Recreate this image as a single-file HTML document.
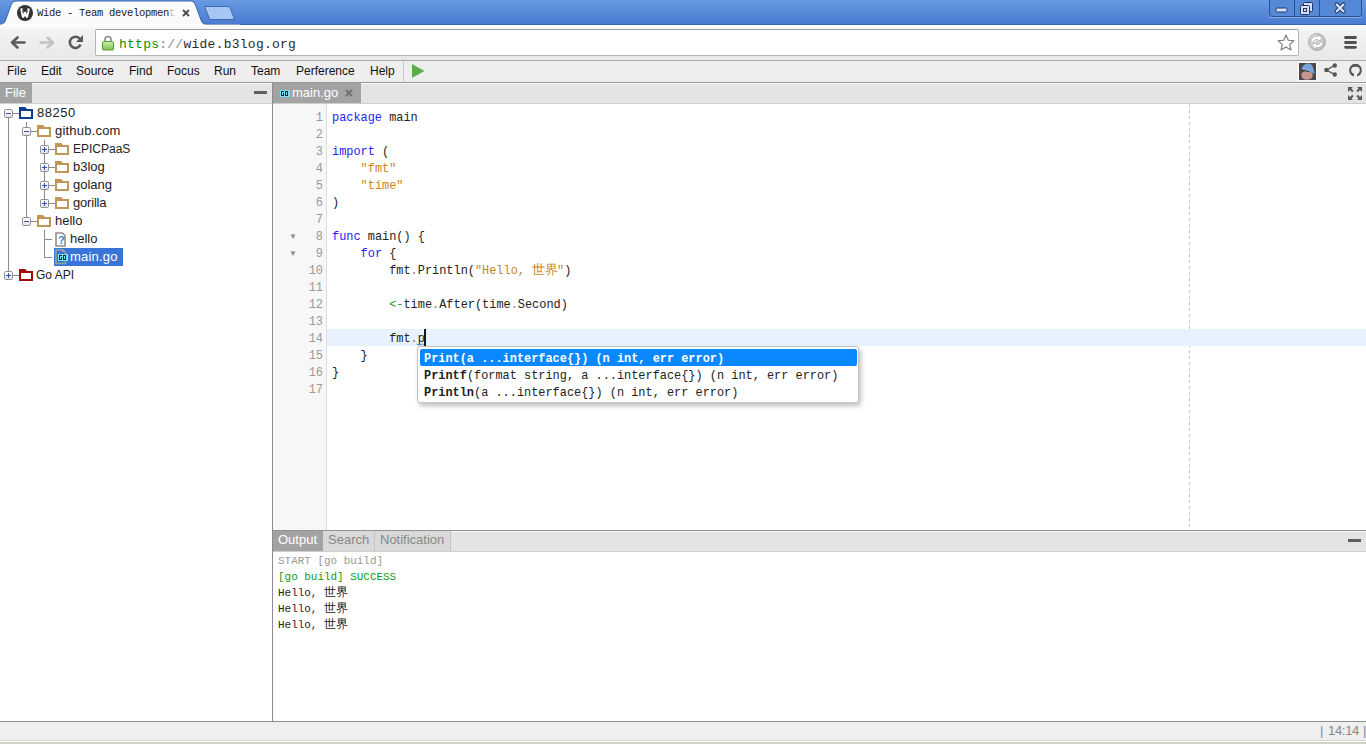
<!DOCTYPE html>
<html><head><meta charset="utf-8">
<style>
html,body{margin:0;padding:0;width:1366px;height:744px;overflow:hidden;background:#fff;position:relative;font-family:"Liberation Sans",sans-serif;}
.a{position:absolute;}
.t{position:absolute;white-space:pre;line-height:1;}
.mono{font-family:"Liberation Mono",monospace;}
svg{position:absolute;display:block;overflow:visible;}
</style></head><body>

<!-- ===== Chrome title bar ===== -->
<div class="a" style="left:0;top:0;width:1366px;height:24px;background:linear-gradient(#679ae1,#4a7bd1);"></div>
<div class="a" style="left:0;top:24px;width:1366px;height:1px;background:#3662b1;"></div>
<!-- active tab -->
<svg style="left:0;top:0" width="240" height="26" viewBox="0 0 240 26">
  <defs><linearGradient id="tabg" x1="0" y1="0" x2="0" y2="1"><stop offset="0" stop-color="#ffffff"/><stop offset="1" stop-color="#f8f8f8"/></linearGradient></defs>
  <path d="M-2 25 L0 24.5 C4 24 5 22 6 19 L11 5 C12.5 2 14 1 17 1 L190 1 C193 1 194 2 195.5 5 L201 20 C202 23 203.5 24.5 207 24.5 L240 24.5 L240 26 L-2 26 Z" fill="url(#tabg)" stroke="#3a64ad" stroke-width="1"/>
  <rect x="0" y="24.6" width="240" height="2" fill="#fdfdfd"/>
  <!-- new tab button -->
  <path d="M204.5 6.5 L227 6.5 C229 6.5 230 7.5 230.6 9 L234.5 19.5 L211.5 19.5 C210 19.5 209.5 18.8 209 17.5 Z" fill="#a6c7f3" stroke="#3f68b3" stroke-width="1"/>
</svg>
<!-- favicon -->
<svg style="left:17px;top:5px" width="16" height="16" viewBox="0 0 16 16">
  <circle cx="8" cy="8" r="8" fill="#333"/>
  <path d="M4.6 4.6 L6.1 11.6 L8 8 L9.9 11.6 L11.4 4.6" stroke="#fff" stroke-width="2.6" fill="none" stroke-linecap="round" stroke-linejoin="round"/>
  <path d="M5.6 5.2 L6.3 8.2 M10.4 5.2 L9.7 8.2" stroke="#333" stroke-width="0.9" stroke-linecap="round"/>
</svg>
<div class="t mono" style="left:37px;top:8px;font-size:10.5px;letter-spacing:-0.3px;color:#1a1a1a;">Wide - Team developmen<span style="color:#bbb">t</span></div>
<svg style="left:182px;top:9px" width="8" height="8" viewBox="0 0 8 8"><path d="M1 1 L7 7 M7 1 L1 7" stroke="#4a4a4a" stroke-width="1.8"/></svg>

<!-- window controls -->
<svg style="left:1269px;top:0" width="94" height="18" viewBox="0 0 94 18">
  <path d="M0.5 0 L0.5 13 C0.5 15.5 2 16.5 4.5 16.5 L89 16.5 C91.5 16.5 92.5 15.5 92.5 13 L92.5 0" fill="#5688d8" stroke="#2d4f8f" stroke-width="1"/>
  <path d="M0.5 17.5 L92.5 17.5" stroke="#80a8e8" stroke-width="1"/>
  <path d="M25.5 0 L25.5 16 M50.5 0 L50.5 16" stroke="#2d4f8f" stroke-width="1"/>
  <rect x="7" y="8" width="11" height="4" rx="1.5" fill="#d3e0f6" stroke="#22355f" stroke-width="1"/>
  <rect x="34.5" y="2.5" width="9" height="9" rx="1" fill="#d3e0f6" stroke="#22355f" stroke-width="1"/>
  <rect x="31.5" y="5.5" width="9" height="9" rx="1" fill="#d3e0f6" stroke="#22355f" stroke-width="1"/>
  <rect x="34" y="8" width="4" height="4" fill="#22355f"/>
  <rect x="35" y="9" width="2" height="2" fill="#d3e0f6"/>
  <path d="M67.8 4.6 L74.4 11.2 M74.4 4.6 L67.8 11.2" stroke="#22355f" stroke-width="4.2" stroke-linecap="round"/>
  <path d="M67.8 4.6 L74.4 11.2 M74.4 4.6 L67.8 11.2" stroke="#d3e0f6" stroke-width="2.3" stroke-linecap="round"/>
</svg>

<!-- ===== Chrome toolbar ===== -->
<div class="a" style="left:0;top:25px;width:1366px;height:35px;background:linear-gradient(#fefefe 0,#f3f3f3 5px,#e8e8e8 35px);"></div>
<div class="a" style="left:0;top:60px;width:1366px;height:1px;background:#a9a9a9;"></div>
<!-- back -->
<svg style="left:10px;top:36px" width="16" height="14" viewBox="0 0 16 14">
  <path d="M14.5 6.5 L2.5 6.5 M7.5 1.5 L2 6.5 L7.5 11.5" stroke="#5c5c5c" stroke-width="2.6" fill="none" stroke-linecap="round" stroke-linejoin="round"/>
</svg>
<!-- forward -->
<svg style="left:39px;top:36px" width="16" height="14" viewBox="0 0 16 14">
  <path d="M1.5 6.5 L13.5 6.5 M8.5 1.5 L14 6.5 L8.5 11.5" stroke="#c2c2c2" stroke-width="2.4" fill="none" stroke-linecap="round" stroke-linejoin="round"/>
</svg>
<!-- reload -->
<svg style="left:68px;top:35px" width="16" height="15" viewBox="0 0 16 15">
  <path d="M12.6 9.5 A5.6 5.6 0 1 1 11.6 3.6" stroke="#5a5a5a" stroke-width="2.6" fill="none"/>
  <path d="M15 0 L15 7 L8 7 Z" fill="#5a5a5a"/>
</svg>
<!-- omnibox -->
<div class="a" style="left:95px;top:29px;width:1202px;height:25px;background:#fff;border:1px solid #b4b4b4;border-top-color:#9d9d9d;border-radius:2px;"></div>
<!-- lock -->
<svg style="left:102px;top:35px" width="12" height="16" viewBox="0 0 12 16">
  <path d="M3 7 L3 4.5 A3 3 0 0 1 9 4.5 L9 7" stroke="#8a8a8a" stroke-width="1.6" fill="none"/>
  <defs><linearGradient id="lk" x1="0" y1="0" x2="0" y2="1"><stop offset="0" stop-color="#cdf0a8"/><stop offset="1" stop-color="#77c04a"/></linearGradient></defs>
  <rect x="0.5" y="6.5" width="11" height="8.5" rx="1" fill="url(#lk)" stroke="#5a9a36" stroke-width="1"/>
</svg>
<div class="t mono" style="left:119px;top:38px;font-size:13px;letter-spacing:0.25px;color:#2a2a2a;"><span style="color:#089108">https</span><span style="color:#8a8a8a">://</span>wide.b3log.org</div>
<!-- star -->
<svg style="left:1277px;top:34px" width="18" height="17" viewBox="0 0 18 17">
  <path d="M9 1 L11.3 6.2 L17 6.7 L12.7 10.4 L14 16 L9 13 L4 16 L5.3 10.4 L1 6.7 L6.7 6.2 Z" fill="#fff" stroke="#777" stroke-width="1.1" stroke-linejoin="round"/>
</svg>
<!-- extension globe -->
<svg style="left:1308px;top:33px" width="18" height="18" viewBox="0 0 18 18">
  <defs><radialGradient id="glb" cx="0.4" cy="0.35" r="0.75"><stop offset="0" stop-color="#f2f2f2"/><stop offset="1" stop-color="#b8b8b8"/></radialGradient></defs>
  <circle cx="9" cy="9" r="8.4" fill="url(#glb)" stroke="#9c9c9c" stroke-width="0.9"/>
  <path d="M2.8 9.2 C2.8 5 6 2.6 10.2 3.4 L10.6 1.6 L14.6 6.2 L9.4 8.4 L9.8 6.6 C7.2 6 5.6 7.4 5.4 9.4 Z" fill="#fff" stroke="#909090" stroke-width="0.6"/>
  <path d="M15.2 8.8 C15.2 13 12 15.4 7.8 14.6 L7.4 16.4 L3.4 11.8 L8.6 9.6 L8.2 11.4 C10.8 12 12.4 10.6 12.6 8.6 Z" fill="#fff" stroke="#909090" stroke-width="0.6"/>
</svg>
<!-- hamburger -->
<svg style="left:1344px;top:36px" width="13" height="13" viewBox="0 0 13 13">
  <path d="M1.5 1.5 L11.5 1.5 M1.5 6.5 L11.5 6.5 M1.5 11.3 L11.5 11.3" stroke="#505050" stroke-width="2.8" stroke-linecap="round"/>
</svg>

<!-- ===== Wide menu bar ===== -->
<div class="a" style="left:0;top:61px;width:1366px;height:21px;background:#eeeeee;"></div>
<div class="a" style="left:0;top:82px;width:1366px;height:1px;background:#9a9a9a;"></div>
<div class="t" style="left:7px;top:65px;font-size:12px;color:#111;">File</div>
<div class="t" style="left:41px;top:65px;font-size:12px;color:#111;">Edit</div>
<div class="t" style="left:76px;top:65px;font-size:12px;color:#111;">Source</div>
<div class="t" style="left:129px;top:65px;font-size:12px;color:#111;">Find</div>
<div class="t" style="left:167px;top:65px;font-size:12px;color:#111;">Focus</div>
<div class="t" style="left:214px;top:65px;font-size:12px;color:#111;">Run</div>
<div class="t" style="left:251px;top:65px;font-size:12px;color:#111;">Team</div>
<div class="t" style="left:296px;top:65px;font-size:12px;color:#111;">Perference</div>
<div class="t" style="left:370px;top:65px;font-size:12px;color:#111;">Help</div>
<div class="a" style="left:403px;top:61px;width:1px;height:21px;background:#c8c8c8;"></div>
<svg style="left:412px;top:64px" width="13" height="14" viewBox="0 0 13 14"><path d="M0 0 L12.5 7 L0 14 Z" fill="#5cad4a"/></svg>
<!-- avatar -->
<div class="a" style="left:1298px;top:62px;width:19px;height:19px;background:#fafafa;"></div>
<svg style="left:1299px;top:63px" width="17" height="17" viewBox="0 0 17 17">
  <rect width="17" height="17" fill="#4f474b"/>
  <path d="M0 0 L17 0 L17 17 L0 17 Z" fill="none"/>
  <ellipse cx="8" cy="12.3" rx="5.6" ry="5" fill="#c5968a"/>
  <path d="M4 16.5 C6 17 9 17 11 16.2 L11 17 L4 17 Z" fill="#3a3348"/>
  <path d="M2.8 6.6 C5 6 8 6.8 11 8 L10.5 9.3 C8 8.6 5 8 3.2 8.4 Z" fill="#2c2326"/>
  <path d="M2.6 6.6 C3.6 2.2 6.5 0.6 9.8 0.6 C13.2 0.9 14.2 4 14.6 7.6 L15.8 10.8 C12 9.2 7 7.2 2.6 6.6 Z" fill="#79a5dc"/>
</svg>
<!-- share -->
<svg style="left:1324px;top:63px" width="14" height="14" viewBox="0 0 14 14">
  <path d="M10.5 2.5 L2.5 7 L10.5 11.5" stroke="#555" stroke-width="1.4" fill="none"/>
  <circle cx="10.8" cy="2.5" r="2.2" fill="#555"/><circle cx="2.4" cy="7" r="2.2" fill="#555"/><circle cx="10.8" cy="11.5" r="2.2" fill="#555"/>
</svg>
<!-- github -->
<svg style="left:1349px;top:63px" width="14" height="14" viewBox="0 0 14 14">
  <path d="M8.2 12.4 A5.4 5.4 0 1 0 4.8 12.4" stroke="#555" stroke-width="2.1" fill="none"/>
  <rect x="3.6" y="1.6" width="5.8" height="2.2" fill="#555"/>
  <path d="M3.2 10.6 L4.8 10.6 M3.6 12 L4.8 12" stroke="#555" stroke-width="0.9"/>
</svg>
<!-- ===== Panels headers ===== -->
<div class="a" style="left:0;top:83px;width:272px;height:20px;background:#e4e4e4;"></div>
<div class="a" style="left:0;top:103px;width:272px;height:1px;background:#cfcfcf;"></div>
<div class="a" style="left:32px;top:83px;width:240px;height:1px;background:#f6f6f6;"></div>
<div class="a" style="left:0;top:83px;width:32px;height:20px;background:#a3a3a3;"></div>
<div class="t" style="left:5px;top:86px;font-size:13px;color:#fff;">File</div>
<div class="a" style="left:254px;top:91px;width:13px;height:3px;background:#5e5e5e;"></div>

<div class="a" style="left:272px;top:83px;width:1px;height:638px;background:#8c8c8c;"></div>

<div class="a" style="left:273px;top:83px;width:1093px;height:20px;background:#e4e4e4;"></div>
<div class="a" style="left:273px;top:103px;width:1093px;height:1px;background:#cfcfcf;"></div>
<div class="a" style="left:361px;top:83px;width:1005px;height:1px;background:#f6f6f6;"></div>
<div class="a" style="left:273px;top:83px;width:88px;height:20px;background:#a3a3a3;"></div>
<svg style="left:0;top:0" width="300" height="100" shape-rendering="crispEdges"><rect x="280" y="90" width="10" height="7" fill="#76e2fa"/>
<rect x="281" y="91" width="1" height="1" fill="#262626"/>
<rect x="282" y="91" width="1" height="1" fill="#262626"/>
<rect x="283" y="91" width="1" height="1" fill="#262626"/>
<rect x="281" y="92" width="1" height="1" fill="#262626"/>
<rect x="281" y="93" width="1" height="1" fill="#262626"/>
<rect x="283" y="93" width="1" height="1" fill="#262626"/>
<rect x="281" y="94" width="1" height="1" fill="#262626"/>
<rect x="283" y="94" width="1" height="1" fill="#262626"/>
<rect x="281" y="95" width="1" height="1" fill="#262626"/>
<rect x="282" y="95" width="1" height="1" fill="#262626"/>
<rect x="283" y="95" width="1" height="1" fill="#262626"/>
<rect x="285" y="91" width="1" height="1" fill="#262626"/>
<rect x="286" y="91" width="1" height="1" fill="#262626"/>
<rect x="287" y="91" width="1" height="1" fill="#262626"/>
<rect x="285" y="92" width="1" height="1" fill="#262626"/>
<rect x="287" y="92" width="1" height="1" fill="#262626"/>
<rect x="285" y="93" width="1" height="1" fill="#262626"/>
<rect x="287" y="93" width="1" height="1" fill="#262626"/>
<rect x="285" y="94" width="1" height="1" fill="#262626"/>
<rect x="287" y="94" width="1" height="1" fill="#262626"/>
<rect x="285" y="95" width="1" height="1" fill="#262626"/>
<rect x="286" y="95" width="1" height="1" fill="#262626"/>
<rect x="287" y="95" width="1" height="1" fill="#262626"/></svg>
<div class="t" style="left:292px;top:86px;font-size:13px;color:#fff;">main.go</div>
<svg style="left:345px;top:89px" width="8" height="8" viewBox="0 0 8 8"><path d="M1 1 L7 7 M7 1 L1 7" stroke="#6e6e6e" stroke-width="1.8"/></svg>
<!-- expand icon -->
<svg style="left:1348px;top:87px" width="14" height="13" viewBox="0 0 14 13">
  <g fill="#595959">
    <path d="M0 0 L5 0 L3.4 1.6 L5.6 3.8 L4.2 5.2 L2 3 L0 5 Z"/>
    <path d="M14 0 L9 0 L10.6 1.6 L8.4 3.8 L9.8 5.2 L12 3 L14 5 Z"/>
    <path d="M0 13 L5 13 L3.4 11.4 L5.6 9.2 L4.2 7.8 L2 10 L0 8 Z"/>
    <path d="M14 13 L9 13 L10.6 11.4 L8.4 9.2 L9.8 7.8 L12 10 L14 8 Z"/>
  </g>
</svg>

<!-- ===== Editor ===== -->
<div class="a" style="left:273px;top:104px;width:53px;height:426px;background:#f7f7f7;"></div>
<div class="a" style="left:326px;top:104px;width:1px;height:426px;background:#dddddd;"></div>
<div class="a" style="left:1189px;top:104px;width:1px;height:426px;background:repeating-linear-gradient(#c4c4c4 0,#c4c4c4 3px,transparent 3px,transparent 6px);"></div>
<div class="a" style="left:327px;top:329px;width:1039px;height:17px;background:#e8f2ff;"></div>

<svg style="left:0;top:104px" width="272" height="190" viewBox="0 0 272 190">
<rect x="54" y="144" width="69" height="18" fill="#3875d7"/>
<defs><linearGradient id="bx" x1="0" y1="0" x2="0" y2="1"><stop offset="0" stop-color="#ffffff"/><stop offset="1" stop-color="#e2e2e2"/></linearGradient></defs>
<rect x="8" y="14" width="1" height="153" fill="#8a8a8a"/>
<rect x="26" y="18" width="1" height="5" fill="#8a8a8a"/>
<rect x="26" y="32" width="1" height="81" fill="#8a8a8a"/>
<rect x="44" y="36" width="1" height="5" fill="#8a8a8a"/>
<rect x="44" y="50" width="1" height="4" fill="#8a8a8a"/>
<rect x="44" y="54" width="1" height="5" fill="#8a8a8a"/>
<rect x="44" y="68" width="1" height="4" fill="#8a8a8a"/>
<rect x="44" y="72" width="1" height="5" fill="#8a8a8a"/>
<rect x="44" y="86" width="1" height="4" fill="#8a8a8a"/>
<rect x="44" y="90" width="1" height="5" fill="#8a8a8a"/>
<rect x="44" y="126" width="1" height="28" fill="#8a8a8a"/>
<rect x="4.5" y="5.5" width="8" height="8" rx="1.2" fill="url(#bx)" stroke="#8f8f8f" stroke-width="1"/>
<rect x="6" y="9" width="5" height="1" fill="#3152a6"/>
<rect x="13" y="9" width="6" height="1" fill="#8a8a8a"/>
<path d="M19 3 L25 3 L27 5 L33 5 L33 15 L19 15 Z M21 7 L21 13 L31 13 L31 7 Z" fill="#0b3e92" fill-rule="evenodd"/>
<rect x="22.5" y="23.5" width="8" height="8" rx="1.2" fill="url(#bx)" stroke="#8f8f8f" stroke-width="1"/>
<rect x="24" y="27" width="5" height="1" fill="#3152a6"/>
<rect x="31" y="27" width="6" height="1" fill="#8a8a8a"/>
<path d="M37 21 L43 21 L45 23 L51 23 L51 33 L37 33 Z M39 25 L39 31 L49 31 L49 25 Z" fill="#c29658" fill-rule="evenodd"/>
<rect x="40.5" y="41.5" width="8" height="8" rx="1.2" fill="url(#bx)" stroke="#8f8f8f" stroke-width="1"/>
<rect x="42" y="45" width="5" height="1" fill="#3152a6"/>
<rect x="44" y="43" width="1" height="5" fill="#3152a6"/>
<rect x="49" y="45" width="6" height="1" fill="#8a8a8a"/>
<path d="M55 39 L61 39 L63 41 L69 41 L69 51 L55 51 Z M57 43 L57 49 L67 49 L67 43 Z" fill="#c29658" fill-rule="evenodd"/>
<rect x="40.5" y="59.5" width="8" height="8" rx="1.2" fill="url(#bx)" stroke="#8f8f8f" stroke-width="1"/>
<rect x="42" y="63" width="5" height="1" fill="#3152a6"/>
<rect x="44" y="61" width="1" height="5" fill="#3152a6"/>
<rect x="49" y="63" width="6" height="1" fill="#8a8a8a"/>
<path d="M55 57 L61 57 L63 59 L69 59 L69 69 L55 69 Z M57 61 L57 67 L67 67 L67 61 Z" fill="#c29658" fill-rule="evenodd"/>
<rect x="40.5" y="77.5" width="8" height="8" rx="1.2" fill="url(#bx)" stroke="#8f8f8f" stroke-width="1"/>
<rect x="42" y="81" width="5" height="1" fill="#3152a6"/>
<rect x="44" y="79" width="1" height="5" fill="#3152a6"/>
<rect x="49" y="81" width="6" height="1" fill="#8a8a8a"/>
<path d="M55 75 L61 75 L63 77 L69 77 L69 87 L55 87 Z M57 79 L57 85 L67 85 L67 79 Z" fill="#c29658" fill-rule="evenodd"/>
<rect x="40.5" y="95.5" width="8" height="8" rx="1.2" fill="url(#bx)" stroke="#8f8f8f" stroke-width="1"/>
<rect x="42" y="99" width="5" height="1" fill="#3152a6"/>
<rect x="44" y="97" width="1" height="5" fill="#3152a6"/>
<rect x="49" y="99" width="6" height="1" fill="#8a8a8a"/>
<path d="M55 93 L61 93 L63 95 L69 95 L69 105 L55 105 Z M57 97 L57 103 L67 103 L67 97 Z" fill="#c29658" fill-rule="evenodd"/>
<rect x="22.5" y="113.5" width="8" height="8" rx="1.2" fill="url(#bx)" stroke="#8f8f8f" stroke-width="1"/>
<rect x="24" y="117" width="5" height="1" fill="#3152a6"/>
<rect x="31" y="117" width="6" height="1" fill="#8a8a8a"/>
<path d="M37 111 L43 111 L45 113 L51 113 L51 123 L37 123 Z M39 115 L39 121 L49 121 L49 115 Z" fill="#c29658" fill-rule="evenodd"/>
<rect x="44" y="135" width="8" height="1" fill="#8a8a8a"/>
<path d="M56 129 L62.5 129 L65 131.5 L65 142 L56 142 Z" fill="#fff" stroke="#8f8f8f" stroke-width="1.6"/>
<text x="58" y="140" font-family="Liberation Sans" font-size="11" font-weight="bold" fill="#3a8ac8">?</text>
<rect x="44" y="153" width="8" height="1" fill="#8a8a8a"/>
<rect x="4.5" y="167.5" width="8" height="8" rx="1.2" fill="url(#bx)" stroke="#8f8f8f" stroke-width="1"/>
<rect x="6" y="171" width="5" height="1" fill="#3152a6"/>
<rect x="8" y="169" width="1" height="5" fill="#3152a6"/>
<rect x="13" y="171" width="6" height="1" fill="#8a8a8a"/>
<path d="M19 165 L25 165 L27 167 L33 167 L33 177 L19 177 Z M21 169 L21 175 L31 175 L31 169 Z" fill="#a50a0a" fill-rule="evenodd"/>
<path d="M56 146 L63 146 L65.5 148.5 L65.5 159.5 L56 159.5 Z" fill="none" stroke="#9d9d9d" stroke-width="1.6"/>
<rect x="62" y="146" width="2" height="2" fill="#9d9d9d"/>
<g shape-rendering="crispEdges"><rect x="58" y="150" width="10" height="7" fill="#76e2fa"/>
<rect x="59" y="151" width="1" height="1" fill="#262626"/>
<rect x="60" y="151" width="1" height="1" fill="#262626"/>
<rect x="61" y="151" width="1" height="1" fill="#262626"/>
<rect x="59" y="152" width="1" height="1" fill="#262626"/>
<rect x="59" y="153" width="1" height="1" fill="#262626"/>
<rect x="61" y="153" width="1" height="1" fill="#262626"/>
<rect x="59" y="154" width="1" height="1" fill="#262626"/>
<rect x="61" y="154" width="1" height="1" fill="#262626"/>
<rect x="59" y="155" width="1" height="1" fill="#262626"/>
<rect x="60" y="155" width="1" height="1" fill="#262626"/>
<rect x="61" y="155" width="1" height="1" fill="#262626"/>
<rect x="63" y="151" width="1" height="1" fill="#262626"/>
<rect x="64" y="151" width="1" height="1" fill="#262626"/>
<rect x="65" y="151" width="1" height="1" fill="#262626"/>
<rect x="63" y="152" width="1" height="1" fill="#262626"/>
<rect x="65" y="152" width="1" height="1" fill="#262626"/>
<rect x="63" y="153" width="1" height="1" fill="#262626"/>
<rect x="65" y="153" width="1" height="1" fill="#262626"/>
<rect x="63" y="154" width="1" height="1" fill="#262626"/>
<rect x="65" y="154" width="1" height="1" fill="#262626"/>
<rect x="63" y="155" width="1" height="1" fill="#262626"/>
<rect x="64" y="155" width="1" height="1" fill="#262626"/>
<rect x="65" y="155" width="1" height="1" fill="#262626"/></g>
</svg>
<!-- tree texts -->
<div class="t" style="left:37px;top:106px;font-size:13px;letter-spacing:0.5px;color:#222;">88250</div>
<div class="t" style="left:55px;top:124px;font-size:13px;letter-spacing:0.2px;color:#222;">github.com</div>
<div class="t" style="left:73px;top:143px;font-size:12px;color:#222;">EPICPaaS</div>
<div class="t" style="left:73px;top:160px;font-size:13px;color:#222;">b3log</div>
<div class="t" style="left:73px;top:178px;font-size:13px;color:#222;">golang</div>
<div class="t" style="left:73px;top:196px;font-size:13px;letter-spacing:-0.2px;color:#222;">gorilla</div>
<div class="t" style="left:55px;top:214px;font-size:13px;color:#222;">hello</div>
<div class="t" style="left:70px;top:232px;font-size:13px;color:#222;">hello</div>
<div class="t" style="left:70px;top:250px;font-size:13px;letter-spacing:0.2px;color:#fff;">main.go</div>
<div class="t" style="left:36px;top:269px;font-size:12px;color:#222;">Go API</div>

<!-- code -->
<style>
.ln{position:absolute;left:273px;width:50px;text-align:right;font-family:"Liberation Mono",monospace;font-size:11.92px;line-height:17px;color:#999;white-space:pre;}
.cd{position:absolute;left:332px;font-family:"Liberation Mono",monospace;font-size:11.92px;line-height:17px;color:#222;white-space:pre;}
.k{color:#2222ff}.s{color:#cc8425}.o{color:#a0703a}.g{color:#1a9a1a}
.cj{display:inline-block;width:25px;font-size:13px;line-height:10px;}
</style>
<div class="ln" style="top:110px;">1
2
3
4
5
6
7
8
9
10
11
12
13
14
15
16
17</div>
<div class="t" style="left:289px;top:233px;font-size:8px;color:#8a8a8a;">&#9660;</div>
<div class="t" style="left:289px;top:250px;font-size:8px;color:#8a8a8a;">&#9660;</div>
<div class="cd" style="top:110px;"><span class="k">package</span> main

<span class="k">import</span> (
    <span class="s">"fmt"</span>
    <span class="s">"time"</span>
)

<span class="k">func</span> main() {
    <span class="k">for</span> {
        fmt<span class="o">.</span>Println(<span class="s">"Hello, <span class="cj">世界</span>"</span>)

        <span class="g">&lt;-</span>time<span class="o">.</span>After(time<span class="o">.</span>Second)

        fmt<span class="o">.</span>p
    }
}
</div>
<svg style="left:416px;top:343px" width="9" height="3" viewBox="0 0 9 3"><path d="M0.5 1 L2 2.2 L3.5 1 L5 2.2 L6.5 1 L8 2.2" stroke="#2c7fd0" stroke-width="0.9" fill="none"/></svg>
<div class="a" style="left:424px;top:329px;width:2px;height:17px;background:#1a1a1a;"></div>

<!-- autocomplete -->
<div class="a" style="left:417px;top:346px;width:440px;height:55px;background:#fff;border:1px solid #c4c4c4;border-radius:3px;box-shadow:2px 3px 5px rgba(0,0,0,0.25);"></div>
<div class="a" style="left:420px;top:349px;width:437px;height:17px;background:#0a88ff;border-radius:2px;"></div>
<div class="cd" style="left:424px;top:351px;font-weight:bold;color:#fff;">Print(a ...interface{}) (n int, err error)</div>
<div class="cd" style="left:424px;top:368px;"><b>Printf</b>(format string, a ...interface{}) (n int, err error)</div>
<div class="cd" style="left:424px;top:385px;"><b>Println</b>(a ...interface{}) (n int, err error)</div>

<!-- ===== Output panel ===== -->
<div class="a" style="left:273px;top:530px;width:1093px;height:1px;background:#929292;"></div>
<div class="a" style="left:273px;top:531px;width:1093px;height:20px;background:#e4e4e4;"></div>
<div class="a" style="left:273px;top:551px;width:1093px;height:1px;background:#cfcfcf;"></div>
<div class="a" style="left:450px;top:531px;width:916px;height:1px;background:#f6f6f6;"></div>
<div class="a" style="left:273px;top:531px;width:50px;height:20px;background:#a3a3a3;"></div>
<div class="a" style="left:323px;top:531px;width:51px;height:20px;background:#d9d9d9;"></div>
<div class="a" style="left:374px;top:531px;width:1px;height:20px;background:#c2c2c2;"></div>
<div class="a" style="left:375px;top:531px;width:75px;height:20px;background:#d9d9d9;"></div>
<div class="a" style="left:450px;top:531px;width:1px;height:20px;background:#c2c2c2;"></div>
<div class="t" style="left:278px;top:533px;font-size:13px;color:#fff;">Output</div>
<div class="t" style="left:328px;top:533px;font-size:13px;color:#888;">Search</div>
<div class="t" style="left:380px;top:533px;font-size:13px;color:#888;">Notification</div>
<div class="a" style="left:1348px;top:539px;width:13px;height:3px;background:#5e5e5e;"></div>
<style>.op{position:absolute;left:278px;font-family:"Liberation Mono",monospace;font-size:10.95px;line-height:16px;white-space:pre;color:#222;}
.cj2{display:inline-block;width:23px;font-size:12px;}</style>
<div class="op" style="top:553px;"><span style="color:#999">START [go build]</span>
<span style="color:#139a13">[go build] SUCCESS</span>
Hello, <span class="cj2">世界</span>
Hello, <span class="cj2">世界</span>
Hello, <span class="cj2">世界</span></div>

<!-- ===== Status bar ===== -->
<div class="a" style="left:0;top:721px;width:1366px;height:1px;background:#8e8e8e;"></div>
<div class="a" style="left:0;top:722px;width:1366px;height:18px;background:#efefef;"></div>
<div class="a" style="left:0;top:740px;width:1366px;height:1px;background:#d8d4ce;"></div>
<div class="a" style="left:0;top:741px;width:1366px;height:1px;background:#ffffff;"></div>
<div class="a" style="left:0;top:742px;width:1366px;height:2px;background:#d4d0c8;"></div>
<div class="t" style="left:1320px;top:724px;font-size:13px;color:#888;">|</div>
<div class="t" style="left:1328px;top:724px;font-size:13px;letter-spacing:-0.3px;color:#888;">14:14</div>
<div class="t" style="left:1363px;top:724px;font-size:13px;color:#888;">|</div>

</body></html>
